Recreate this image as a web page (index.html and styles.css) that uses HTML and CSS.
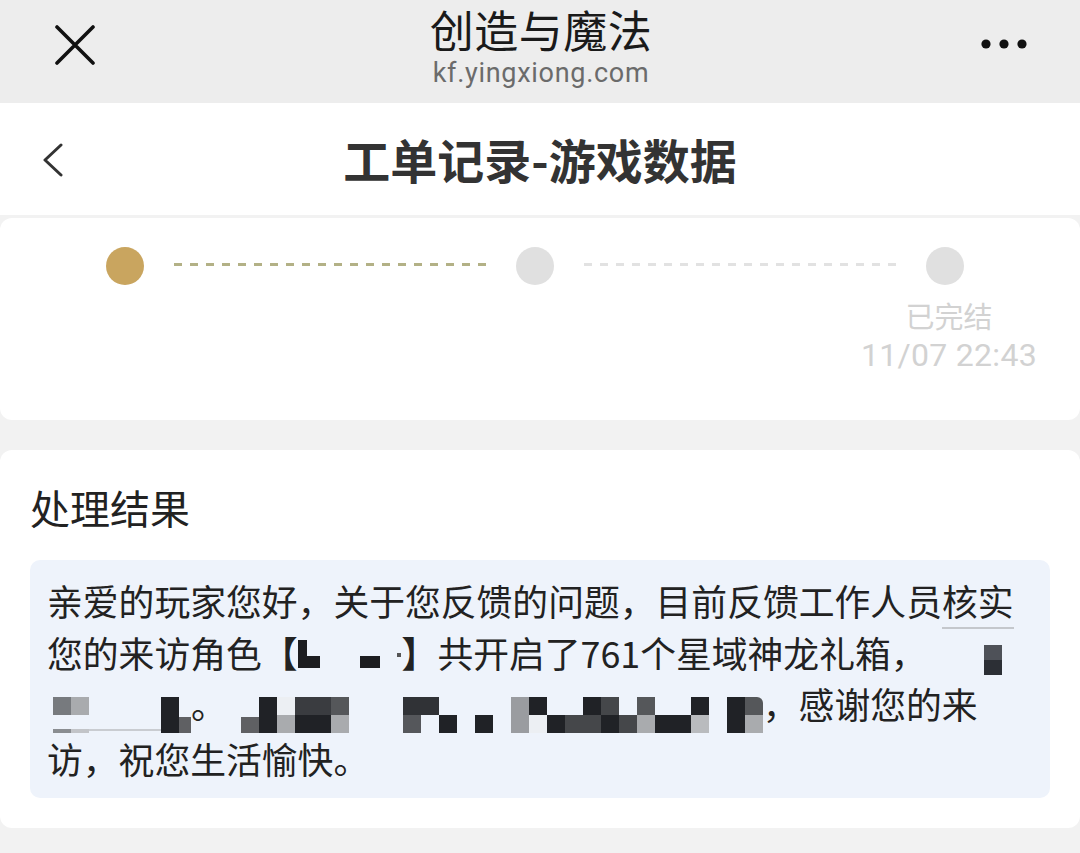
FILE: index.html
```html
<!DOCTYPE html>
<html lang="zh-CN">
<head>
    <meta charset="UTF-8">
    <meta name="viewport" content="width=device-width, initial-scale=1.0">
    <title>工单记录-游戏数据</title>
    <link rel="stylesheet" href="styles.css">
</head>
<body>
    <!-- WebView top bar -->
    <div class="topbar">
        <svg class="close-icon" viewBox="0 0 40 40" width="40" height="40">
            <path d="M2 2 L38 38 M38 2 L2 38" stroke="#111" stroke-width="3.6" stroke-linecap="round" fill="none"/>
        </svg>
        <div class="topbar-title">
            <div class="site-name">创造与魔法</div>
            <div class="site-url">kf.yingxiong.com</div>
        </div>
        <svg class="more-icon" viewBox="0 0 46 10" width="46" height="10">
            <circle cx="5" cy="5" r="4.6" fill="#111"/>
            <circle cx="23" cy="5" r="4.6" fill="#111"/>
            <circle cx="41" cy="5" r="4.6" fill="#111"/>
        </svg>
    </div>

    <!-- Page header -->
    <div class="navbar">
        <svg class="back-icon" viewBox="0 0 22 34" width="22" height="34">
            <path d="M19 2 L3 17 L19 32" stroke="#333" stroke-width="3" stroke-linecap="round" stroke-linejoin="round" fill="none"/>
        </svg>
        <h1 class="page-title">工单记录-游戏数据</h1>
        <span></span>
    </div>

    <!-- Progress -->
    <div class="card steps-card">
        <div class="steps">
            <span class="dot dot-active"></span>
            <span class="line line-active"></span>
            <span class="dot"></span>
            <span class="line"></span>
            <span class="dot"></span>
        </div>
        <div class="step-labels">
            <div class="step-label">
                <div class="step-name">已完结</div>
                <div class="step-time">11/07 22:43</div>
            </div>
        </div>
    </div>

    <!-- Result -->
    <div class="card result-card">
        <h2 class="result-title">处理结果</h2>
        <div class="result-box">
            <p class="result-text">亲爱的玩家您好，关于您反馈的问题，目前反馈工作人员<span class="smudge">核实</span><br>您的来访角色<span class="bracket">【</span><span class="mosaic m-name"><i class="tall"></i><i class="low w13"></i><i class="blank w40"></i><i class="low w20"></i><i class="blank w17"></i><i class="pip"></i></span><span class="bracket">】</span>共开启了761个星域神龙礼箱，<span class="mosaic m-tail"><i class="t1"></i></span><br><span class="mosaic m-head"><i class="h1"></i><i class="h2"></i><i class="h3"></i><i class="h3"></i><i class="h3"></i><i class="h3"></i><i class="g1"></i><i class="g3b w12"></i></span>。<span class="mosaic m-body"><i class="g3b"></i><i class="g1"></i><i class="g6"></i><i class="g7"></i><i class="g7"></i><i class="g8"></i><i class="blank"></i><i class="blank"></i><i class="blank"></i><i class="g9"></i><i class="g10"></i><i class="g11"></i><i class="blank"></i><i class="g11"></i><i class="blank"></i><i class="g16"></i><i class="g12"></i><i class="g11"></i><i class="g13"></i><i class="g17"></i><i class="g14"></i><i class="g13"></i><i class="g8"></i><i class="g11"></i><i class="g11"></i><i class="g15"></i><i class="blank"></i><i class="g1"></i><i class="g8 round"></i></span>，感谢您的来<br>访，祝您生活愉快。</p>
        </div>
    </div>
</body>
</html>
```

FILE: styles.css
```css
body { margin: 0; padding: 0; background-color: #f2f2f2; font-family: "Noto Sans CJK SC", "Noto Sans", sans-serif; color: #222; }

/* top bar */
.topbar { height: 103px; box-sizing: border-box; background-color: #ededed; display: grid; grid-template-columns: 1fr auto 1fr; align-items: start; padding: 6px 53px 0 55px; }
.close-icon { margin-top: 19px; }
.more-icon { margin-top: 33px; justify-self: end; }
.topbar-title { text-align: center; }
.site-name { font-size: 44px; line-height: 46px; color: #1a1a1a; letter-spacing: 0.5px; }
.site-url { margin-top: 6px; font-family: "Roboto", "Noto Sans", sans-serif; font-size: 27px; line-height: 30px; color: #6b6b6b; letter-spacing: 0.7px; }

/* page header */
.navbar { height: 112px; background-color: #fff; display: grid; grid-template-columns: 1fr auto 1fr; align-items: center; padding: 0 42px; }
.back-icon { margin-top: 2px; }
.page-title { margin: 0; font-size: 47px; font-weight: bold; color: #333; line-height: 56px; }

/* cards */
.card { background-color: #fff; border-radius: 12px; }
.steps-card { margin-top: 3px; height: 202px; padding-top: 29px; box-sizing: border-box; }
.result-card { margin-top: 30px; height: 378px; padding: 30px 30px 0; box-sizing: border-box; }

/* steps */
.steps { display: flex; align-items: center; padding: 0 116px 0 106px; }
.dot { width: 38px; height: 38px; border-radius: 50%; background-color: #e0e0e0; flex: none; }
.dot-active { background-color: #c9a55f; }
.line { flex: 1; height: 3px; margin: -4px 28px 0 30px; background-image: linear-gradient(to right, #e2e2e2 8px, transparent 8px); background-size: 16px 3px; }
.line-active { background-image: linear-gradient(to right, #b3b186 8px, transparent 8px); }
.step-labels { display: flex; justify-content: flex-end; padding-right: 43px; margin-top: 11px; }
.step-label { text-align: center; color: #d2d2d2; }
.step-name { font-size: 29px; line-height: 38px; }
.step-time { font-family: "Roboto", "Noto Sans", sans-serif; font-size: 32px; line-height: 42px; letter-spacing: 0.3px; }

/* result */
.result-title { margin: 0; font-size: 40px; font-weight: normal; line-height: 54px; color: #222; }
.result-box { margin-top: 26px; background-color: #eef3fb; border-radius: 10px; padding: 15px 17px; height: 238px; box-sizing: border-box; }
.result-text { margin: 0; font-size: 35.8px; line-height: 51.5px; color: #222; white-space: nowrap; }
.smudge { border-bottom: 2px solid #c4c7cc; padding-bottom: 1px; }
.bracket { font-weight: bold; }

/* pixelated (mosaic) parts */
.mosaic { display: inline-flex; vertical-align: -14px; height: 36px; }
.mosaic i { display: block; width: 18px; height: 100%; flex: none; }
.mosaic .blank { background: transparent; }
.mosaic .w12 { width: 12px; }
.mosaic .w13 { width: 13px; }
.mosaic .w17 { width: 17px; }
.mosaic .w20 { width: 20px; }
.mosaic .w40 { width: 40px; }

.m-name { height: 28px; vertical-align: 0; }
.m-name .tall { width: 9px; background-color: #1c1d20; }
.m-name .low { background: linear-gradient(to bottom, transparent 16px, #1c1d20 16px); }
.m-name .pip { width: 4px; margin-right: 1px; background: linear-gradient(to bottom, transparent 13px, #555 13px, #555 17px, transparent 17px); }

.m-tail { margin-left: 57px; height: 30px; vertical-align: -7px; }
.m-tail .t1 { background: linear-gradient(to bottom, #4e5158 15px, #2c2f35 15px); }

.m-head { margin-left: 6px; }
.h1 { background: linear-gradient(to bottom, #777a7e 50%, transparent 50%, transparent 88%, #8a8d91 88%); }
.h2 { background: linear-gradient(to bottom, #a9abae 50%, transparent 50%, transparent 88%, #c2c4c8 88%); }
.h3 { background: linear-gradient(to bottom, transparent 88%, #c9ccd1 88%, #c9ccd1 94%, transparent 94%); }

.m-body { margin-left: 14px; }
.g1 { background-color: #202226; }
.g3b { background: linear-gradient(to bottom, transparent 55%, #5f6063 55%); }
.g6 { background: linear-gradient(to bottom, #eceff3 50%, #a9abae 50%); }
.g7 { background: linear-gradient(to bottom, #3a3c40 50%, #202226 50%); }
.g8 { background: linear-gradient(to bottom, #55575a 50%, #a9abae 50%); }
.g8.round { border-top-right-radius: 6px; }
.g9 { background: linear-gradient(to bottom, #303236 50%, #55575b 50%); }
.g10 { background: linear-gradient(to bottom, #303236 50%, transparent 50%); }
.g11 { background: linear-gradient(to bottom, transparent 50%, #202226 50%); }
.g12 { background: linear-gradient(to bottom, #202226 50%, #eceff3 50%); }
.g13 { background: linear-gradient(to bottom, transparent 50%, #45474a 50%); }
.g14 { background: linear-gradient(to bottom, #45474a 50%, #202226 50%); }
.g15 { background: linear-gradient(to bottom, #202226 50%, #b9bbbe 50%); }
.g16 { background-color: #9a9ca0; }
.g17 { background: linear-gradient(to bottom, #202226 50%, #45474a 50%); }
```
